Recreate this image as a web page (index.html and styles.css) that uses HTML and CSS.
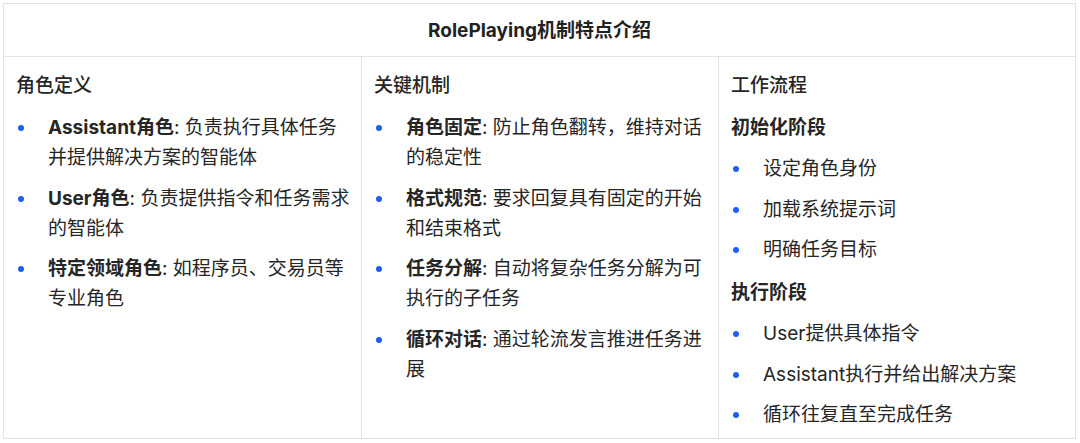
FILE: index.html
```html
<!DOCTYPE html>
<html lang="zh-CN">
<head>
<meta charset="utf-8">
<title>RolePlaying机制特点介绍</title>
<link rel="stylesheet" href="styles.css">
</head>
<body>
<div class="table">
  <div class="title">RolePlaying机制特点介绍</div>
  <div class="body">
    <div class="col">
      <h3 class="col-head">角色定义</h3>
      <ul class="list">
        <li class="item"><span class="txt"><b>Assistant角色</b>: 负责执行具体任务并提供解决方案的智能体</span></li>
        <li class="item"><span class="txt"><b>User角色</b>: 负责提供指令和任务需求的智能体</span></li>
        <li class="item"><span class="txt"><b>特定领域角色</b>: 如程序员、交易员等专业角色</span></li>
      </ul>
    </div>
    <div class="col">
      <h3 class="col-head">关键机制</h3>
      <ul class="list">
        <li class="item"><span class="txt"><b>角色固定</b>: 防止角色翻转，维持对话的稳定性</span></li>
        <li class="item"><span class="txt"><b>格式规范</b>: 要求回复具有固定的开始和结束格式</span></li>
        <li class="item"><span class="txt"><b>任务分解</b>: 自动将复杂任务分解为可执行的子任务</span></li>
        <li class="item"><span class="txt"><b>循环对话</b>: 通过轮流发言推进任务进展</span></li>
      </ul>
    </div>
    <div class="col">
      <h3 class="col-head">工作流程</h3>
      <h4 class="phase">初始化阶段</h4>
      <ul class="list">
        <li class="item"><span class="txt">设定角色身份</span></li>
        <li class="item"><span class="txt">加载系统提示词</span></li>
        <li class="item"><span class="txt">明确任务目标</span></li>
      </ul>
      <h4 class="phase phase-next">执行阶段</h4>
      <ul class="list">
        <li class="item"><span class="txt">User提供具体指令</span></li>
        <li class="item"><span class="txt">Assistant执行并给出解决方案</span></li>
        <li class="item"><span class="txt">循环往复直至完成任务</span></li>
      </ul>
    </div>
  </div>
</div>
</body>
</html>
```
FILE: styles.css
```css
* { box-sizing: border-box; }

html, body {
  margin: 0;
  padding: 0;
  background: #ffffff;
}

body {
  font-family: "Inter", "Noto Sans CJK SC", sans-serif;
  font-size: 19px;
  color: #262626;
  padding: 3px 4px 0 3px;
}

.table {
  border: 1px solid #e3e3e3;
}

.title {
  height: 53px;
  padding-bottom: 4px;
  border-bottom: 1px solid #e3e3e3;
  display: flex;
  align-items: center;
  justify-content: center;
  font-weight: 700;
  font-size: 19px;
  color: #222222;
}

.body {
  display: grid;
  grid-template-columns: repeat(3, 1fr);
}

.col {
  padding: 14px 8px 8px 12px;
}

.col + .col {
  border-left: 1px solid #e3e3e3;
}

.col-head {
  margin: 0 0 12px;
  font-size: 19px;
  line-height: 30px;
  font-weight: 500;
}

.phase {
  margin: 0 0 11px;
  font-size: 19px;
  line-height: 30px;
  font-weight: 700;
}

.phase-next {
  margin-top: 13px;
}

.list {
  list-style: none;
  margin: 0;
  padding: 0;
}

.item {
  display: grid;
  grid-template-columns: 32px 1fr;
  line-height: 30px;
}

.item + .item {
  margin-top: 10.5px;
}

.item::before {
  content: "";
  width: 6px;
  height: 6px;
  border-radius: 50%;
  background: #1d5ff5;
  margin: 12px 0 0 2px;
}

.txt b {
  font-weight: 700;
}
```
